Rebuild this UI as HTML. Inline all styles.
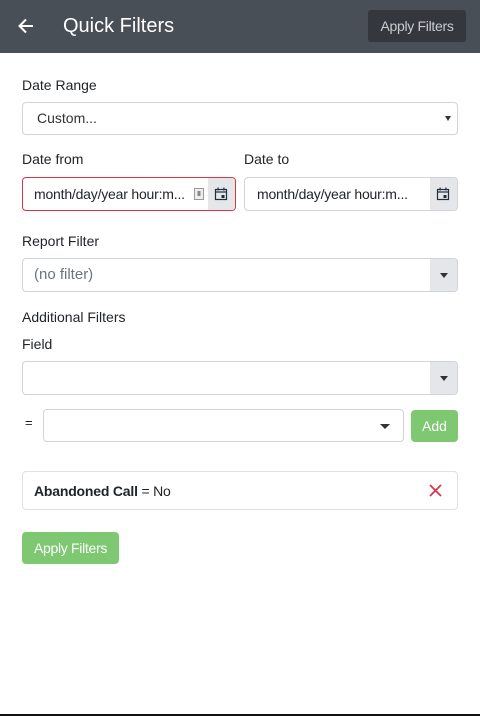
<!DOCTYPE html>
<html><head><meta charset="utf-8"><style>
*{box-sizing:border-box;margin:0;padding:0}
body{width:480px;height:716px;background:#fff;font-family:"Liberation Sans",sans-serif;color:#212529;position:relative;overflow:hidden}
.hdr{position:absolute;left:0;top:0;width:480px;height:53px;background:#494f57}
.ttl{position:absolute;left:63px;top:15px;font-size:20px;color:#fff}
.hbtn{position:absolute;left:368px;top:10px;width:98px;height:32px;background:#34383e;border-radius:3px;color:#c9cbcd;font-size:14px;line-height:32px;text-align:center;letter-spacing:-0.3px}
.lbl{position:absolute;left:22px;font-size:14px;color:#212529}
.box{position:absolute;border:1px solid #ced4da;border-radius:4px;background:#fff;font-size:15px}
.add{position:absolute;background:#7dc870;color:#fff;border-radius:4px;text-align:center;font-size:14px}
.grey{position:absolute;top:0;right:0;bottom:0;background:#e4e6ea;border-radius:0 3px 3px 0}
.tri{position:absolute;width:0;height:0;border-left:4px solid transparent;border-right:4px solid transparent;border-top:5px solid #333}
.bot{position:absolute;left:0;top:714px;width:480px;height:2px;background:#111}
</style></head><body>
<div class="hdr">
<svg style="position:absolute;left:17px;top:17px" width="18" height="18" viewBox="0 0 18 18"><path d="M16 9H3M9 2.5L2.5 9 9 15.5" stroke="#fff" stroke-width="2" fill="none"/></svg>
<div class="ttl">Quick Filters</div>
<div class="hbtn">Apply Filters</div>
</div>
<div class="lbl" style="top:77px">Date Range</div>
<div class="box" style="left:22px;top:102px;width:436px;height:33px"><span style="position:absolute;left:14px;top:7px;color:#333;font-size:14px">Custom...</span><div class="tri" style="right:6px;top:13px;border-width:5px 3px 0 3px"></div></div>
<div class="lbl" style="top:151px">Date from</div>
<div class="lbl" style="top:151px;left:244px">Date to</div>
<div class="box" style="left:22px;top:177px;width:214px;height:34px;border-color:#dc3545"><span style="position:absolute;left:11px;top:8px;font-size:14px;letter-spacing:-0.2px">month/day/year hour:m...</span>
<svg style="position:absolute;left:171px;top:10px" width="10" height="12"><rect x="0.5" y="0.5" width="9" height="11" fill="#eee" stroke="#999"/><rect x="3.5" y="3" width="3" height="5" fill="#888"/></svg>
<div class="grey" style="width:27px"><svg style="position:absolute;left:6px;top:9px" width="14" height="14" viewBox="0 0 14 14"><rect x="1.5" y="2.5" width="11" height="10" fill="none" stroke="#1f2d3d" stroke-width="1.2"/><line x1="1.5" y1="5" x2="12.5" y2="5" stroke="#1f2d3d" stroke-width="1.2"/><rect x="3.5" y="0.5" width="1.2" height="3" fill="#1f2d3d"/><rect x="9.3" y="0.5" width="1.2" height="3" fill="#1f2d3d"/><rect x="7.5" y="8" width="3" height="3" fill="#1f2d3d"/></svg></div></div>
<div class="box" style="left:244px;top:177px;width:214px;height:34px"><span style="position:absolute;left:12px;top:8px;font-size:14px;letter-spacing:-0.2px">month/day/year hour:m...</span>
<div class="grey" style="width:27px"><svg style="position:absolute;left:6px;top:9px" width="14" height="14" viewBox="0 0 14 14"><rect x="1.5" y="2.5" width="11" height="10" fill="none" stroke="#1f2d3d" stroke-width="1.2"/><line x1="1.5" y1="5" x2="12.5" y2="5" stroke="#1f2d3d" stroke-width="1.2"/><rect x="3.5" y="0.5" width="1.2" height="3" fill="#1f2d3d"/><rect x="9.3" y="0.5" width="1.2" height="3" fill="#1f2d3d"/><rect x="7.5" y="8" width="3" height="3" fill="#1f2d3d"/></svg></div></div>
<div class="lbl" style="top:233px">Report Filter</div>
<div class="box" style="left:22px;top:258px;width:436px;height:34px"><span style="position:absolute;left:11px;top:7px;color:#6c757d;font-size:15px">(no filter)</span><div class="grey" style="width:27px"><div class="tri" style="left:10px;top:14px"></div></div></div>
<div class="lbl" style="top:309px">Additional Filters</div>
<div class="lbl" style="top:336px">Field</div>
<div class="box" style="left:22px;top:361px;width:436px;height:34px"><div class="grey" style="width:27px"><div class="tri" style="left:10px;top:14px"></div></div></div>
<div class="lbl" style="top:415px;left:25px;font-size:13px">=</div>
<div class="box" style="left:43px;top:409px;width:361px;height:33px"><div class="tri" style="right:13px;top:14px;border-width:5px 5px 0 5px"></div></div>
<div class="add" style="left:411px;top:410px;width:47px;height:32px;line-height:32px">Add</div>
<div class="box" style="left:22px;top:471px;width:436px;height:39px;border-color:#dee2e6"><span style="position:absolute;left:11px;top:11px;font-size:14px;letter-spacing:-0.2px"><b>Abandoned Call</b> = No</span>
<svg style="position:absolute;left:406px;top:12px" width="13" height="13"><path d="M1 1L12 12M12 1L1 12" stroke="#dc3545" stroke-width="1.8"/></svg></div>
<div class="add" style="left:22px;top:532px;width:97px;height:32px;line-height:32px;letter-spacing:-0.3px">Apply Filters</div>
<div class="bot"></div>
</body></html>
